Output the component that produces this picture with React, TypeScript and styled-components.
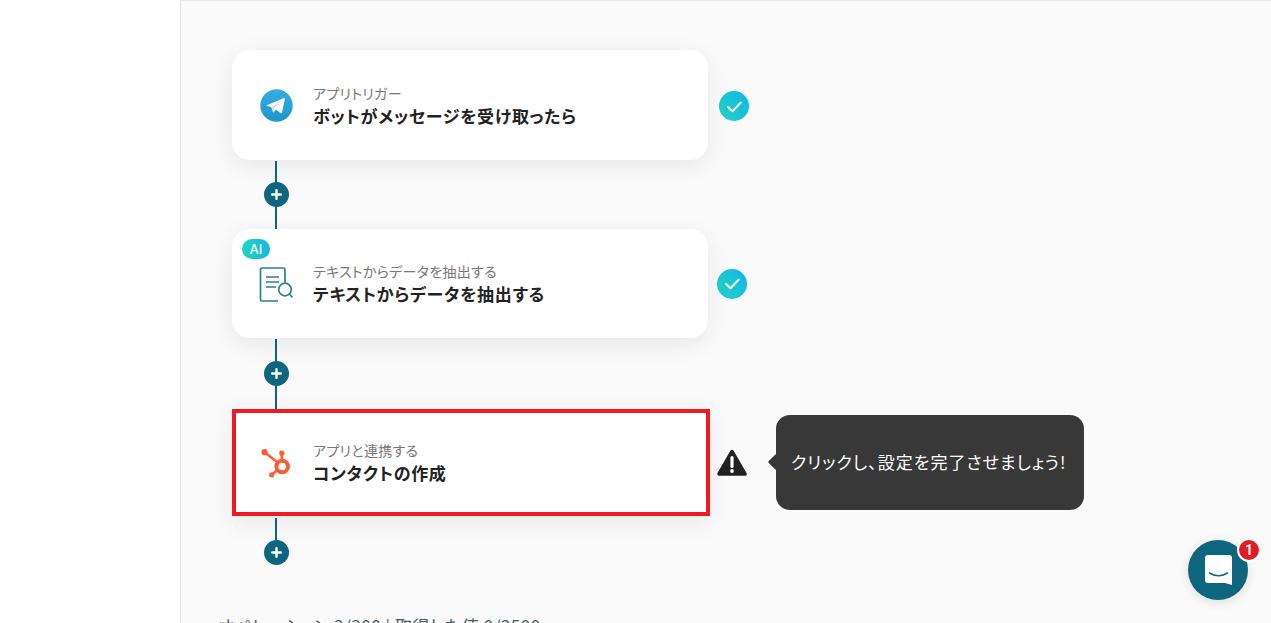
import React from "react";
import styled, { createGlobalStyle } from "styled-components";

const Global = createGlobalStyle`
  html, body { margin: 0; padding: 0; height: 100%; overflow: hidden; background: #fff; }
  body { font-family: "Noto Sans CJK JP", "Noto Sans", sans-serif; font-feature-settings: "palt"; }
  #root { height: 100%; }
`;

const Page = styled.div`
  display: flex;
  height: 623px;
  overflow: hidden;
`;
const Side = styled.aside`
  width: 180px;
  flex: none;
  background: #fff;
`;
const Main = styled.main`
  flex: 1;
  background: #fafafa;
  border-left: 1px solid #e4e4e4;
  border-top: 1px solid #e8e8e8;
  padding: 49px 0 0 51px;
`;
const Row = styled.div`
  display: flex;
  align-items: center;
`;
const Card = styled.div<{ $h: number; $alert?: boolean }>`
  position: relative;
  box-sizing: border-box;
  width: ${(p) => (p.$alert ? 478 : 476)}px;
  height: ${(p) => p.$h}px;
  display: flex;
  align-items: center;
  padding-left: ${(p) => (p.$alert ? 23 : 27)}px;
  background: #fff;
  border-radius: ${(p) => (p.$alert ? 0 : 18)}px;
  border: ${(p) => (p.$alert ? "4px solid #ed1c24" : "none")};
  box-shadow: 0 6px 24px rgba(0, 0, 0, 0.08);
`;
const IconBox = styled.div`
  width: 34px;
  height: 34px;
  flex: none;
  display: flex;
  align-items: center;
  justify-content: center;
`;
const Texts = styled.div`
  margin: -4px 0 0 20px;
  display: flex;
  flex-direction: column;
`;
const Sub = styled.div`
  font-size: 14px;
  line-height: 24px;
  letter-spacing: 0.3px;
  color: #777;
`;
const Title = styled.div`
  font-size: 17px;
  line-height: 21px;
  letter-spacing: 0.7px;
  font-weight: 700;
  color: #222;
`;
const AiBadge = styled.span`
  position: absolute;
  left: 10px;
  top: 10px;
  width: 28px;
  height: 20px;
  border-radius: 10px;
  background: linear-gradient(90deg, #22d4c4, #14b8e0);
  color: #fff;
  font-family: "Inter", sans-serif;
  font-size: 13px;
  font-weight: 500;
  line-height: 20px;
  text-align: center;
`;
const Connector = styled.div<{ $gap: number; $top: number; $bottom: number }>`
  display: flex;
  flex-direction: column;
  align-items: center;
  width: 25px;
  margin-left: 31.5px;
  padding-top: ${(p) => p.$gap}px;
  &::before {
    content: "";
    width: 2px;
    height: ${(p) => p.$top}px;
    background: #0e667e;
  }
  &::after {
    content: "";
    width: 2px;
    height: ${(p) => p.$bottom}px;
    background: #0e667e;
  }
`;
const Plus = styled.div`
  width: 25px;
  height: 25px;
  border-radius: 50%;
  background: #0e667e;
  flex: none;
  display: flex;
  align-items: center;
  justify-content: center;
`;
const Status = styled.div<{ $gap: number; $drop?: number }>`
  margin-left: ${(p) => p.$gap}px;
  margin-top: ${(p) => p.$drop ?? 0}px;
  width: 30px;
  height: 30px;
  flex: none;
  border-radius: 50%;
  background: linear-gradient(60deg, #26d4c2, #0cb5ea);
  display: flex;
  align-items: center;
  justify-content: center;
`;
const Warn = styled.div`
  margin-left: 7px;
  width: 30px;
  height: 28px;
  flex: none;
`;
const Tip = styled.div`
  position: relative;
  margin-left: 29px;
  width: 308px;
  height: 95px;
  box-sizing: border-box;
  padding: 0 0 3px 15px;
  display: flex;
  align-items: center;
  background: #383838;
  border-radius: 14px;
  color: #fff;
  font-size: 17px;
  letter-spacing: 1px;
  &::before {
    content: "";
    position: absolute;
    left: -6px;
    top: 41px;
    width: 12px;
    height: 12px;
    border-radius: 2px;
    background: #383838;
    transform: rotate(45deg);
    clip-path: polygon(0 0, 0 100%, 100% 100%);
  }
`;
const Usage = styled.div`
  margin: 51px 0 0 -14px;
  font-size: 17px;
  line-height: 20px;
  letter-spacing: 0.55px;
  color: #4a5a66;
  white-space: nowrap;
`;
const Chat = styled.button`
  position: fixed;
  left: 1188px;
  top: 540px;
  width: 60px;
  height: 60px;
  padding: 0;
  border: none;
  border-radius: 50%;
  background: #0e667e;
  box-shadow: 0 2px 12px rgba(0, 0, 0, 0.12);
  display: flex;
  align-items: center;
  justify-content: center;
`;
const Badge = styled.span`
  position: absolute;
  left: 49px;
  top: -2px;
  box-sizing: border-box;
  width: 24px;
  height: 24px;
  border-radius: 50%;
  border: 2px solid #fff;
  background: #e31b23;
  color: #fff;
  font-family: "Roboto", sans-serif;
  font-size: 14px;
  font-weight: 700;
  line-height: 20px;
  text-align: center;
`;

const PlusIcon = () => (
  <svg width="11" height="11" viewBox="0 0 11 11">
    <path d="M5.5 1.2v8.6M1.2 5.5h8.6" stroke="#fff" strokeWidth="2.4" strokeLinecap="round" />
  </svg>
);
const Check = () => (
  <svg width="16" height="13" viewBox="0 0 16 13" fill="none">
    <path d="M2 7l4.500 4.300L14.800 2.500" stroke="#fff" strokeWidth="2" strokeLinecap="round" strokeLinejoin="round" />
  </svg>
);
const Telegram = () => (
  <svg width="33" height="33" viewBox="0 0 33 33">
    <defs>
      <linearGradient id="tg" x1="0" y1="0" x2="0" y2="1">
        <stop offset="0" stopColor="#37aee2" />
        <stop offset="1" stopColor="#1e96c8" />
      </linearGradient>
    </defs>
    <circle cx="16.5" cy="16.5" r="16.2" fill="url(#tg)" />
    <path d="M6.8 16.200l16.800-6.900c.9-.3 1.500.2 1.200 1.300l-2.800 12.600c-.2 1-.8 1.200-1.600.7l-4.300-3.100-2.100 2c-.4.4-.7.500-1 .5l.3-4.400-3.400-1.100-3.100-1c-.9-.3-.9-.5 0-.6z" fill="#fff" />
    <path d="M13.300 23.400c-.3 0-.5-.3-.6-.6l-1.500-4.900 10.200-6.100-7.100 7.100-.3 3.900z" fill="#d2e4f0" />
  </svg>
);
const DocSearch = () => (
  <svg width="34" height="36" viewBox="0 0 34 36" fill="none" stroke="#2d7f95" strokeWidth="1.7">
    <path d="M19 35H3a1.500 1.500 0 0 1-1.500-1.500v-30A1.500 1.500 0 0 1 3 2h21.500A1.500 1.500 0 0 1 26 3.500v13" />
    <path d="M7 11h13M7 16h13M7 21h10" />
    <circle cx="26" cy="23.500" r="6.300" />
    <path d="M30.500 28l3 3.500" />
  </svg>
);
const HubSpot = () => (
  <svg width="30" height="32" viewBox="0 0 30 32" fill="#ff5c35">
    <circle cx="3.500" cy="5.200" r="3.100" />
    <circle cx="20.800" cy="6.200" r="2.600" />
    <circle cx="10.700" cy="27.800" r="2.600" />
    <path d="M4 5.500L16 15" stroke="#ff5c35" strokeWidth="2.600" fill="none" />
    <path d="M20.800 7v7" stroke="#ff5c35" strokeWidth="2.600" fill="none" />
    <path d="M11 27.500l5.500-4.500" stroke="#ff5c35" strokeWidth="2.600" fill="none" />
    <circle cx="21.200" cy="19.500" r="5.800" fill="none" stroke="#ff5c35" strokeWidth="4" />
  </svg>
);
const Warning = () => (
  <svg width="30" height="28" viewBox="0 0 30 28">
    <path d="M15 2.500L28 25H2z" fill="#222" stroke="#222" strokeWidth="3.500" strokeLinejoin="round" />
    <path d="M15 8.500v9" stroke="#fff" strokeWidth="3.200" strokeLinecap="round" />
    <circle cx="15" cy="22" r="1.900" fill="#fff" />
  </svg>
);
const ChatIcon = () => (
  <svg width="27" height="30" viewBox="0 0 27 30">
    <path d="M3 0h21a3 3 0 0 1 3 3v27l-7-2H3a3 3 0 0 1-3-3V3a3 3 0 0 1 3-3z" fill="#fff" />
    <path d="M4.500 18q9 5.500 18 0" fill="none" stroke="#0e667e" strokeWidth="1.500" strokeLinecap="round" />
  </svg>
);

export default function App() {
  return (
    <Page>
      <Global />
      <Side />
      <Main>
        <Row>
          <Card $h={110}>
            <IconBox><Telegram /></IconBox>
            <Texts>
              <Sub>アプリトリガー</Sub>
              <Title>ボットがメッセージを受け取ったら</Title>
            </Texts>
          </Card>
          <Status $gap={11} $drop={2}><Check /></Status>
        </Row>
        <Connector $gap={1} $top={21} $bottom={22}><Plus><PlusIcon /></Plus></Connector>
        <Row>
          <Card $h={109}>
            <AiBadge>AI</AiBadge>
            <IconBox><DocSearch /></IconBox>
            <Texts>
              <Sub>テキストからデータを抽出する</Sub>
              <Title>テキストからデータを抽出する</Title>
            </Texts>
          </Card>
          <Status $gap={9}><Check /></Status>
        </Row>
        <Connector $gap={1} $top={22} $bottom={23}><Plus><PlusIcon /></Plus></Connector>
        <Row>
          <Card $h={107} $alert>
            <IconBox><HubSpot /></IconBox>
            <Texts>
              <Sub>アプリと連携する</Sub>
              <Title>コンタクトの作成</Title>
            </Texts>
          </Card>
          <Warn><Warning /></Warn>
          <Tip>クリックし、設定を完了させましょう!</Tip>
        </Row>
        <Connector $gap={2} $top={22} $bottom={0}><Plus><PlusIcon /></Plus></Connector>
        <Usage>オペレーション 3/300 | 取得した値 0/2500</Usage>
      </Main>
      <Chat>
        <ChatIcon />
        <Badge>1</Badge>
      </Chat>
    </Page>
  );
}
